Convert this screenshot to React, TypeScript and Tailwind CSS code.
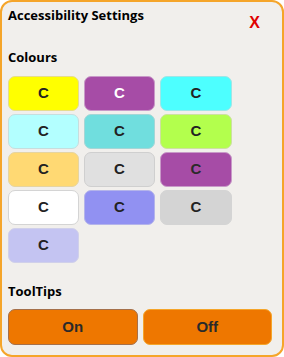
import React from "react";

const colours = [
  { bg: "bg-[#ffff00]", border: "border-[#e6dc8c]", text: "text-[#222]" },
  { bg: "bg-[#a64ca6]", border: "border-[#c89ac8]", text: "text-white" },
  { bg: "bg-[#4dffff]", border: "border-[#9ee6e6]", text: "text-[#222]" },
  { bg: "bg-[#b3ffff]", border: "border-[#c6dede]", text: "text-[#222]" },
  { bg: "bg-[#70dede]", border: "border-[#a4d6d6]", text: "text-[#222]" },
  { bg: "bg-[#b3ff4d]", border: "border-[#cde0a0]", text: "text-[#222]" },
  { bg: "bg-[#ffd973]", border: "border-[#e6d4a0]", text: "text-[#222]" },
  { bg: "bg-[#e0e0e0]", border: "border-[#cfcfcf]", text: "text-[#222]" },
  { bg: "bg-[#a64ca6]", border: "border-[#c89ac8]", text: "text-[#2a2a2a]" },
  { bg: "bg-white", border: "border-[#d4d4d4]", text: "text-[#222]" },
  { bg: "bg-[#9191f2]", border: "border-[#b4b4ea]", text: "text-[#222]" },
  { bg: "bg-[#d4d4d4]", border: "border-[#d4d4d4]", text: "text-[#222]" },
  { bg: "bg-[#c4c4f2]", border: "border-[#d0d0ea]", text: "text-[#222]" },
];

export default function App() {
  return (
    <div className="h-[357px] w-[284px] bg-white">
      <div
        className="flex h-full w-full flex-col rounded-[12px] border-2 border-[#f5a52a] bg-[#f1efec] px-[6px]"
        style={{ fontFamily: '"Open Sans", "Liberation Sans", sans-serif' }}
      >
        <div className="flex items-start justify-between">
          <h1 className="mt-[4px] text-[13px] font-bold leading-[18px] text-black">
            Accessibility Settings
          </h1>
          <button
            className="mr-[16px] mt-[12px] text-[16px] font-bold leading-[18px] text-[#e00000]"
            style={{ fontFamily: '"Liberation Sans", Arial, sans-serif' }}
          >
            X
          </button>
        </div>

        <h2 className="mt-[16px] text-[13px] font-bold leading-[18px] text-black">Colours</h2>

        <div className="mt-[10px] grid grid-cols-[71px_71px_72px] gap-x-[5px] gap-y-[3px]">
          {colours.map((c, i) => (
            <button
              key={i}
              className={`flex h-[35px] items-center justify-center rounded-[7px] border text-[15px] font-bold ${c.bg} ${c.border} ${c.text}`}
              style={{ fontFamily: '"Liberation Sans", Arial, sans-serif' }}
            >
              C
            </button>
          ))}
        </div>

        <h2 className="mt-[19px] text-[13px] font-bold leading-[18px] text-black">ToolTips</h2>

        <div
          className="mt-[9px] grid w-[264px] grid-cols-2 gap-x-[5px]"
          style={{ fontFamily: '"Liberation Sans", Arial, sans-serif' }}
        >
          <button className="h-[36px] rounded-[7px] border border-[#a5704a] bg-[#ee7700] text-[15px] font-bold text-[#2a2a2a]">
            On
          </button>
          <button className="h-[36px] rounded-[7px] border border-[#f5a52a] bg-[#ee7700] text-[15px] font-bold text-[#2a2a2a]">
            Off
          </button>
        </div>
      </div>
    </div>
  );
}
